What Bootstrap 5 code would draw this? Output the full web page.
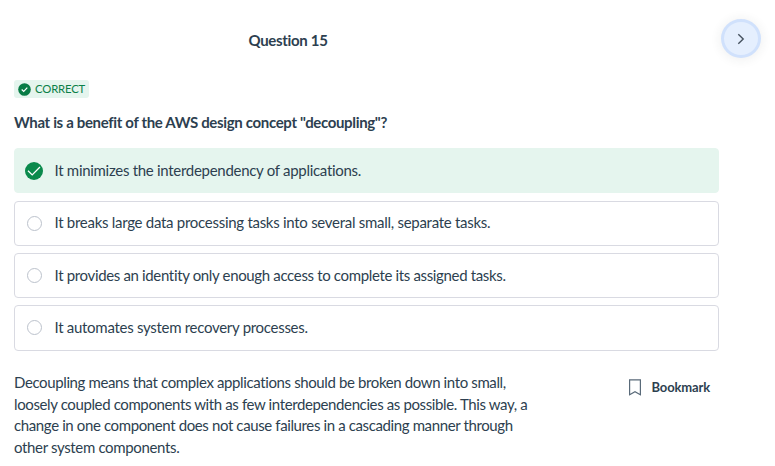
<!DOCTYPE html>
<html lang="en">
<head>
<meta charset="utf-8">
<meta name="viewport" content="width=device-width, initial-scale=1">
<title>Question 15</title>
<link href="https://cdn.jsdelivr.net/npm/bootstrap@5.3.0/dist/css/bootstrap.min.css" rel="stylesheet">
<style>
body{font-family:Lato,"Liberation Sans",sans-serif;font-size:15px;line-height:21.7px;letter-spacing:-.29px;color:#2d3f50;background:#fff;overflow:hidden}
.quiz-head{height:80px;padding:19px 14px 0 14px}
.quiz-title{width:548px;padding-top:10px;font-size:15px;line-height:22px;font-weight:700;letter-spacing:-.32px}
.next-btn{width:40px;height:39px;padding:0;border:3px solid #d0e1fc;background:#e5effe;box-shadow:0 1px 12px rgba(40,50,60,.09)}
.quiz-body{width:719px;padding-left:14px}
.status-tag{height:18px;padding:0 4px;border-radius:3px;background:#e5f5ee;color:#0a8048;font-size:11.3px;line-height:18px;letter-spacing:-.15px;gap:4px}
.prompt{margin:13px 0 0;font-size:15px;line-height:22px;font-weight:700;letter-spacing:-.34px}
.answers{margin-top:15.48px;gap:7.05px}
.answer{height:45.3px;padding-left:12px;border:1px solid #d9dae2;border-radius:4px}
.answer.is-correct{height:45px;padding-left:10px;background:#e5f5ee;border-color:#e5f5ee}
.answer .dot{width:15px;height:15px;border:1px solid #bcc2cc;border-radius:50%;margin-right:12.5px}
.answer.is-correct svg{margin-right:11.5px}
.loose{letter-spacing:-.28px}
.tight{letter-spacing:-.345px}
.tighter{letter-spacing:-.38px}
.explain{margin-top:21.5px}
.explain p{width:540px}
.bookmark{margin-right:9px;padding-top:5px;font-size:13px;font-weight:700;letter-spacing:-.14px;gap:9.3px}
</style>
</head>
<body>
<header class="quiz-head d-flex justify-content-between align-items-start">
  <h1 class="quiz-title text-center mb-0">Question 15</h1>
  <button class="next-btn btn rounded-circle d-flex align-items-center justify-content-center" aria-label="Next">
    <svg width="10" height="14" viewBox="0 0 10 14" fill="none" stroke="#46525f" stroke-width="1.4"><path d="M2.3 2.3 7.2 7 2.3 11.7"/></svg>
  </button>
</header>
<main class="quiz-body">
  <div class="d-flex">
    <span class="status-tag d-inline-flex align-items-center"><svg width="13" height="13" viewBox="0 0 13 13"><circle cx="6.5" cy="6.5" r="6.3" fill="#087c46"/><path d="M3.7 6.5 5.7 8.4 9.3 4.7" fill="none" stroke="#fff" stroke-width="1.2"/></svg>CORRECT</span>
  </div>
  <h2 class="prompt">What is a benefit of the AWS design concept "decoupling"?</h2>
  <div class="answers d-flex flex-column">
    <div class="answer is-correct d-flex align-items-center"><svg width="18" height="18" viewBox="0 0 18 18"><circle cx="9" cy="9" r="9" fill="#0a8a4c"/><path d="M3 8.8 7.2 12.9 15 5" fill="none" stroke="#fff" stroke-width="1.3"/></svg><span>It minimizes the interdependency of applications.</span></div>
    <div class="answer d-flex align-items-center"><i class="dot"></i><span class="loose">It breaks large data processing tasks into several small, separate tasks.</span></div>
    <div class="answer d-flex align-items-center"><i class="dot"></i><span class="tight">It provides an identity only enough access to complete its assigned tasks.</span></div>
    <div class="answer d-flex align-items-center"><i class="dot"></i><span>It automates system recovery processes.</span></div>
  </div>
  <div class="explain d-flex justify-content-between align-items-start">
    <p class="tighter mb-0">Decoupling means that complex applications should be broken down into small,<br>loosely coupled components with as few interdependencies as possible. This way, a<br>change in one component does not cause failures in a cascading manner through<br><span class="tight">other system components.</span></p>
    <div class="bookmark d-flex align-items-center"><svg width="14" height="17" viewBox="0 0 14 17" fill="none" stroke="#596a79" stroke-width="1.2"><path d="M1.6.8H12.4V15.7L7 12.7 1.6 15.7Z"/></svg><span>Bookmark</span></div>
  </div>
</main>
<script src="https://cdn.jsdelivr.net/npm/bootstrap@5.3.0/dist/js/bootstrap.bundle.min.js"></script>
</body>
</html>
